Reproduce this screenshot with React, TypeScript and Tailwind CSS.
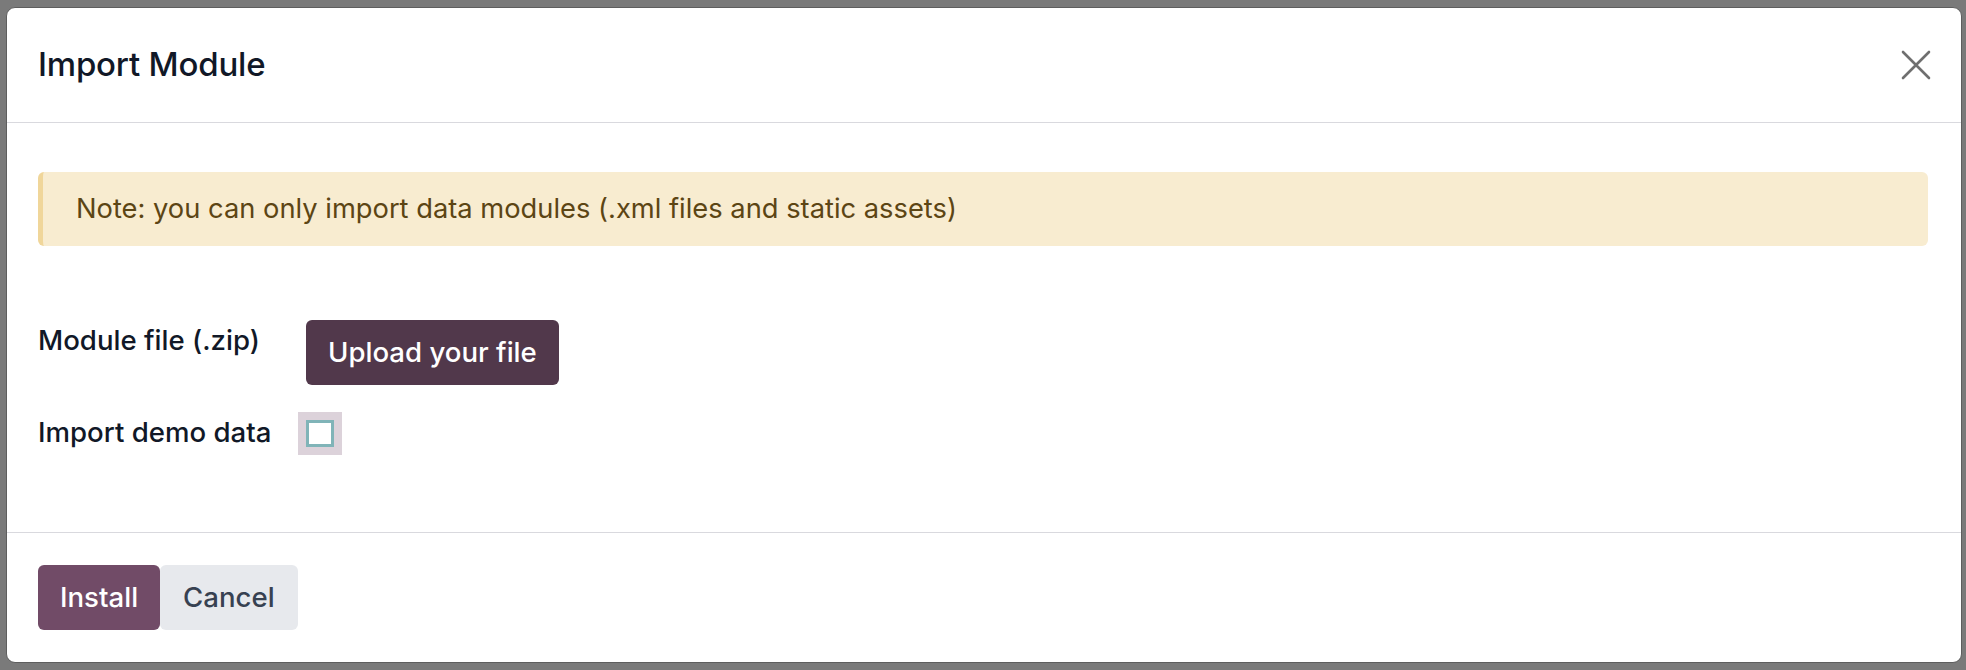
import React, { useState } from 'react';

const CloseIcon = () => (
  <svg width="30" height="30" viewBox="0 0 30 30" fill="none" stroke="#6f6f6f" strokeWidth="2.6" strokeLinecap="round">
    <path d="M2 2 L28 28 M28 2 L2 28" />
  </svg>
);

const App: React.FC = () => {
  const [demo, setDemo] = useState(false);

  return (
    <div className="w-[1966px] h-[670px] bg-[#7a7a7a] pt-[7px] pl-[6px] font-['Inter',sans-serif]">
      {/* Modal */}
      <div className="w-[1956px] h-[656px] bg-white rounded-[9px] border border-[#5e5e5e] flex flex-col overflow-hidden">
        {/* Header */}
        <div className="h-[115px] shrink-0 flex items-center justify-between pl-[31px] pr-[30px] border-b border-[#d9d9de]">
          <h4 className="text-[33px] font-medium text-[#111827] tracking-[-0.2px]">Import Module</h4>
          <button aria-label="Close" className="w-[30px] h-[30px] flex items-center justify-center">
            <CloseIcon />
          </button>
        </div>

        {/* Body */}
        <div className="flex-1 pt-[49px] pl-[31px] pr-[33px]">
          <div className="h-[74px] flex items-center rounded-[6px] bg-[#f8ecd0] border-l-[5px] border-[#f0d69a] pl-[33px]">
            <span className="text-[27.3px] text-[#5c4514]">
              Note: you can only import data modules (.xml files and static assets)
            </span>
          </div>

          <div className="mt-[74px] flex">
            <div className="w-[260px] leading-[40px] text-[27.6px] font-medium text-[#111827]">Module file (.zip)</div>
            <button className="ml-2 h-[65px] px-[22px] rounded-[6px] bg-[#51384b] text-white text-[27.6px] font-medium">
              Upload your file
            </button>
          </div>

          <div className="mt-[26px] flex items-center h-[44px]">
            <div className="w-[260px] text-[27.6px] font-medium text-[#111827]">Import demo data</div>
            <label className="w-[44px] h-[43px] bg-[#dcd2da] flex items-center justify-center cursor-pointer">
              <input
                type="checkbox"
                checked={demo}
                onChange={() => setDemo(!demo)}
                className="appearance-none w-[28px] h-[27px] bg-white border-[3px] border-[#80b4b8] checked:bg-[#714b67]"
              />
            </label>
          </div>
        </div>

        {/* Footer */}
        <div className="h-[130px] shrink-0 flex items-center pl-[31px] border-t border-[#d9d9de]">
          <button className="h-[65px] px-[22px] rounded-[6px] bg-[#714b67] text-white text-[27.6px] font-medium">
            Install
          </button>
          <button className="h-[65px] px-[23px] rounded-[6px] bg-[#e7e9ed] text-[#374151] text-[27.6px] font-medium">
            Cancel
          </button>
        </div>
      </div>
    </div>
  );
};

export default App;
